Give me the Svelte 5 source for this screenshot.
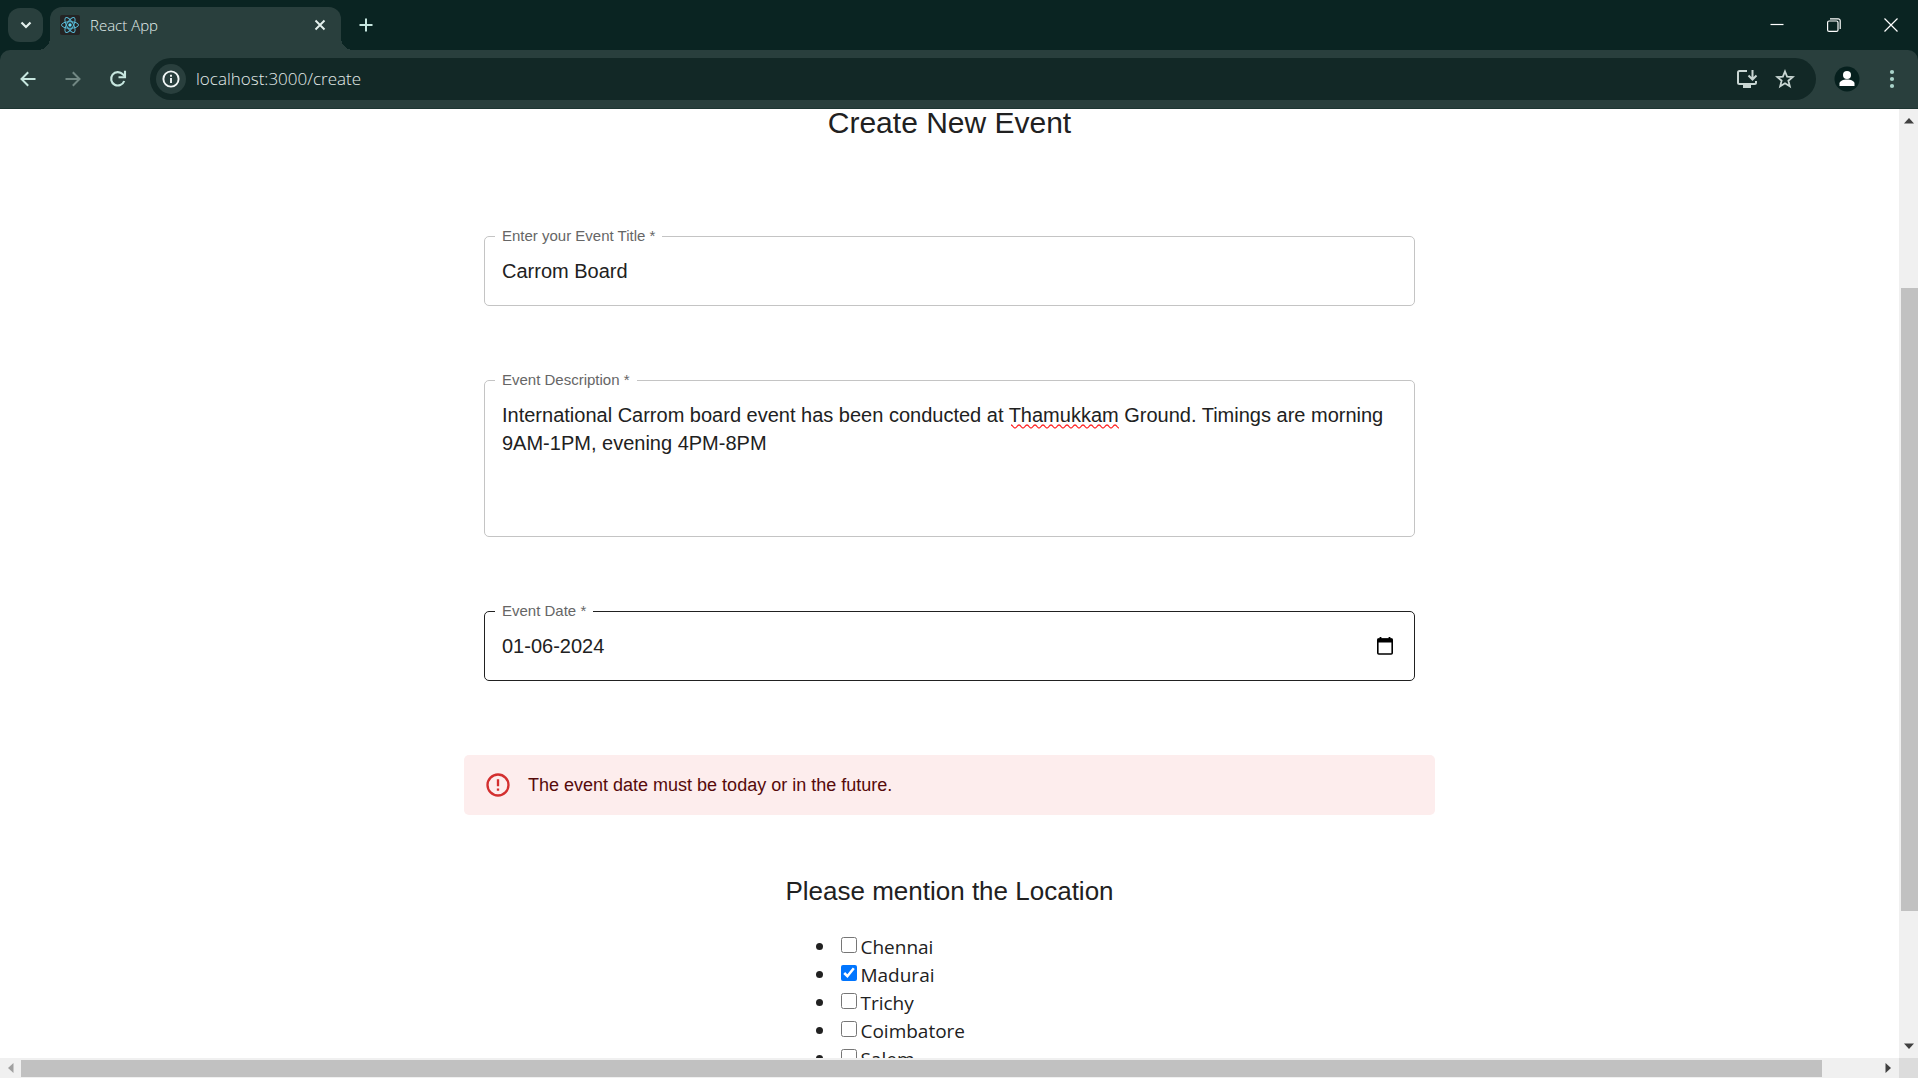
<script>
  let title = $state('Carrom Board');
  let description = $state(
    'International Carrom board event has been conducted at Thamukkam Ground. Timings are morning 9AM-1PM, evening 4PM-8PM'
  );
  let date = $state('01-06-2024');
  let url = $state('localhost:3000/create');
  let locations = $state([
    { name: 'Chennai', checked: false },
    { name: 'Madurai', checked: true },
    { name: 'Trichy', checked: false },
    { name: 'Coimbatore', checked: false },
    { name: 'Salem', checked: false }
  ]);
</script>

<div class="browser">
  <header class="tabstrip">
    <button class="tab-search" aria-label="Search tabs">
      <svg width="12" height="8" viewBox="0 0 12 8"><path d="M1.5 1.5 6 6l4.500-4.500" fill="none" stroke="#e4f1ee" stroke-width="2.200" /></svg>
    </button>
    <div class="tab">
      <svg class="favicon" width="20" height="20" viewBox="0 0 20 20">
        <rect width="20" height="20" rx="2" fill="#242424" />
        <g fill="none" stroke="#58b9d6" stroke-width="1">
          <ellipse cx="10" cy="10" rx="8.500" ry="3.300" />
          <ellipse cx="10" cy="10" rx="8.500" ry="3.300" transform="rotate(60 10 10)" />
          <ellipse cx="10" cy="10" rx="8.500" ry="3.300" transform="rotate(120 10 10)" />
        </g>
        <circle cx="10" cy="10" r="1.700" fill="#61dafb" />
      </svg>
      <span class="tab-title">React App</span>
      <button class="icon small" aria-label="Close tab">
        <svg width="12" height="12" viewBox="0 0 12 12"><path d="M1.500 1.500l9 9M10.500 1.500l-9 9" stroke="#e4f1ee" stroke-width="1.900" /></svg>
      </button>
    </div>
    <button class="icon new-tab" aria-label="New tab">
      <svg width="14" height="14" viewBox="0 0 14 14"><path d="M7 0.500v13M0.500 7h13" stroke="#c6e6df" stroke-width="2" /></svg>
    </button>
    <div class="window-controls">
      <button class="icon" aria-label="Minimize">
        <svg width="14" height="14" viewBox="0 0 14 14"><path d="M0.500 6.500h13" stroke="#fff" stroke-width="1.200" /></svg>
      </button>
      <button class="icon" aria-label="Restore">
        <svg width="14" height="14" viewBox="0 0 14 14" fill="none" stroke="#fff" stroke-width="1.200"><rect x="0.600" y="3" width="10.400" height="10.400" rx="1.500" /><path d="M3 0.800h8.200a2 2 0 0 1 2 2V11" /></svg>
      </button>
      <button class="icon" aria-label="Close window">
        <svg width="14" height="14" viewBox="0 0 14 14"><path d="M0.500 0.500l13 13M13.500 0.500l-13 13" stroke="#fff" stroke-width="1.200" /></svg>
      </button>
    </div>
  </header>

  <nav class="toolbar">
    <button class="icon" aria-label="Back">
      <svg width="16" height="16" viewBox="0 0 16 16"><path d="M15.500 8H1.800M8.200 1.200 1.500 8l6.700 6.800" fill="none" stroke="#c6e6df" stroke-width="2" /></svg>
    </button>
    <button class="icon" aria-label="Forward">
      <svg width="16" height="16" viewBox="0 0 16 16"><path d="M0.500 8h13.700M7.800 1.200 14.500 8l-6.700 6.800" fill="none" stroke="#718783" stroke-width="2" /></svg>
    </button>
    <button class="icon" aria-label="Reload">
      <svg width="18" height="18" viewBox="0 0 18 18"><path d="M15.200 11A6.700 6.700 0 1 1 13.800 4.300L15.800 6.300" fill="none" stroke="#c6e6df" stroke-width="2.100" /><path d="M16 0.800V7.300H9.500" fill="none" stroke="#c6e6df" stroke-width="2.100" /></svg>
    </button>
    <div class="omnibox">
      <button class="site-info" aria-label="View site information">
        <svg width="18" height="18" viewBox="0 0 18 18"><circle cx="9" cy="9" r="7.600" fill="none" stroke="#f2f7f6" stroke-width="1.900" /><path d="M9 8v5M9 4.800v2" stroke="#f2f7f6" stroke-width="1.900" /></svg>
      </button>
      <input class="url" type="text" aria-label="Address" spellcheck="false" bind:value={url} />
      <button class="icon" aria-label="Install app">
        <svg width="22" height="20" viewBox="0 0 22 20" fill="none" stroke="#c9d6d3" stroke-width="2"><path d="M11 2H3.500A1.500 1.500 0 0 0 2 3.500v10A1.500 1.500 0 0 0 3.500 15h15a1.500 1.500 0 0 0 1.500-1.500V12" /><path d="M16.500 1v9M12.500 6.500l4 4 4-4" /><path d="M7 17.500h8" stroke-width="3" /></svg>
      </button>
      <button class="icon" aria-label="Bookmark this tab">
        <svg width="20" height="20" viewBox="0 0 20 20"><path d="M10 2.500l2.100 5.200 5.600.4-4.300 3.600 1.400 5.500L10 14.200l-4.800 3 1.400-5.500-4.300-3.600 5.600-.4z" fill="none" stroke="#c9d6d3" stroke-width="1.800" /></svg>
      </button>
    </div>
    <button class="icon" aria-label="Profile">
      <svg width="26" height="26" viewBox="0 0 26 26"><circle cx="13" cy="13" r="12.500" fill="#06201e" /><circle cx="13" cy="9" r="4" fill="#fff" /><path d="M5.500 20v-2.500c0-2.500 4-4 7.500-4s7.500 1.500 7.500 4V20z" fill="#fff" /></svg>
    </button>
    <button class="icon" aria-label="Menu">
      <svg width="6" height="20" viewBox="0 0 6 20" fill="#a9d3ca"><circle cx="3" cy="3" r="2.100" /><circle cx="3" cy="10" r="2.100" /><circle cx="3" cy="17" r="2.100" /></svg>
    </button>
  </nav>

  <div class="viewport">
    <main class="page">
      <h1>Create New Event</h1>
      <form>
        <fieldset>
          <legend><label for="title">Enter your Event Title *</label></legend>
          <input id="title" type="text" bind:value={title} />
        </fieldset>
        <fieldset class="area">
          <legend><label for="description">Event Description *</label></legend>
          <textarea id="description" spellcheck="false" bind:value={description}></textarea>
          <svg class="squiggle" width="108" height="5" viewBox="0 0 108 5">
            <defs>
              <pattern id="wave" width="8" height="5" patternUnits="userSpaceOnUse"><path d="M-2 2.500Q0 -0.500 2 2.500T6 2.500T10 2.500" fill="none" stroke="#f22" stroke-width="1.300" /></pattern>
            </defs>
            <rect width="108" height="5" fill="url(#wave)" />
          </svg>
        </fieldset>
        <fieldset class="active">
          <legend><label for="date">Event Date *</label></legend>
          <div class="date-row">
            <input id="date" type="text" bind:value={date} />
            <button type="button" class="icon calendar" aria-label="Open calendar">
              <svg width="16" height="18" viewBox="0 0 16 18"><path d="M3.500 0v3M12.500 0v3" stroke="#000" stroke-width="1.800" /><rect x="0.800" y="2" width="14.400" height="15" rx="1" fill="none" stroke="#000" stroke-width="1.600" /><path d="M0.500 1.500h15v4h-15z" /></svg>
            </button>
          </div>
        </fieldset>
      </form>
      <div class="alert" role="alert">
        <svg width="28" height="28" viewBox="0 0 24 24" fill="#d32f2f"><path d="M11 15h2v2h-2zm0-8h2v6h-2zm1-5C6.470 2 2 6.500 2 12a10 10 0 1 0 10-10zm0 18a8 8 0 1 1 0-16 8 8 0 0 1 0 16z" /></svg>
        <span>The event date must be today or in the future.</span>
      </div>
      <section class="locations">
        <h2>Please mention the Location</h2>
        <ul>
          {#each locations as place}
            <li><label><input type="checkbox" bind:checked={place.checked} />{place.name}</label></li>
          {/each}
        </ul>
      </section>
    </main>
    <div class="scroll vertical">
      <svg width="10" height="6" viewBox="0 0 10 6"><path d="M0 5.500 5 0l5 5.500z" fill="#404040" /></svg>
      <div class="track"><div class="thumb"></div></div>
      <svg width="10" height="6" viewBox="0 0 10 6"><path d="M0 .5 5 6 10 .5z" fill="#404040" /></svg>
    </div>
    <div class="scroll horizontal">
      <svg width="6" height="10" viewBox="0 0 6 10"><path d="M5.500 0 0 5l5.500 5z" fill="#a0a0a0" /></svg>
      <div class="track"><div class="thumb"></div></div>
      <svg width="6" height="10" viewBox="0 0 6 10"><path d="M.5 0 6 5l-5.500 5z" fill="#404040" /></svg>
    </div>
    <div class="corner"></div>
  </div>
</div>

<style>
  :global(body) {
    margin: 0;
    overflow: hidden;
    background: #0a2422;
  }
  .browser {
    display: flex;
    flex-direction: column;
    height: 100vh;
    color: #212121;
    font-family: 'Liberation Sans', Arial, sans-serif;
  }
  .browser * {
    box-sizing: border-box;
  }
  button {
    display: flex;
    align-items: center;
    justify-content: center;
    flex: none;
    padding: 0;
    border: 0;
    background: none;
  }
  input,
  textarea {
    border: 0;
    outline: 0;
    background: none;
    color: inherit;
    font: inherit;
  }
  svg {
    display: block;
    flex: none;
  }
  .icon {
    width: 28px;
    height: 28px;
  }

  .tabstrip {
    display: flex;
    align-items: center;
    flex: none;
    height: 50px;
    padding-left: 8px;
    background: #0a2422;
  }
  .tab-search {
    width: 35px;
    height: 34px;
    border-radius: 12px;
    background: #293f3d;
  }
  .tab {
    position: relative;
    display: flex;
    align-items: center;
    align-self: flex-end;
    gap: 10px;
    width: 291px;
    height: 43px;
    margin-left: 7px;
    padding: 0 7px 7px 10px;
    border-radius: 12px 12px 0 0;
    background: #293f3d;
  }
  .tab::before,
  .tab::after {
    content: '';
    position: absolute;
    bottom: 0;
    width: 12px;
    height: 12px;
  }
  .tab::before {
    right: 100%;
    background: radial-gradient(circle at 0 0, transparent 12px, #293f3d 12px);
  }
  .tab::after {
    left: 100%;
    background: radial-gradient(circle at 100% 0, transparent 12px, #293f3d 12px);
  }
  .tab-title {
    flex: 1;
    color: #e4f1ee;
    font: 15px/20px 'Open Sans', 'Noto Sans', sans-serif;
    font-weight: 300;
  }
  .new-tab {
    margin-left: 11px;
  }
  .window-controls {
    display: flex;
    gap: 29px;
    margin-left: auto;
    padding-right: 13px;
  }

  .toolbar {
    display: flex;
    align-items: center;
    flex: none;
    gap: 17px;
    height: 59px;
    padding: 0 12px 0 14px;
    border-bottom: 1px solid #1d3532;
    border-radius: 10px 10px 0 0;
    background: #293f3d;
  }
  .omnibox {
    display: flex;
    align-items: center;
    flex: 1;
    gap: 10px;
    height: 42px;
    margin-left: 1px;
    padding: 0 17px 0 6px;
    border-radius: 21px;
    background: #122826;
  }
  .site-info {
    width: 30px;
    height: 30px;
    border-radius: 50%;
    background: #293f3d;
  }
  .url {
    flex: 1;
    min-width: 0;
    padding: 0;
    color: #e4ecea;
    font: 17px/24px 'Open Sans', 'Noto Sans', sans-serif;
    font-weight: 300;
  }

  .viewport {
    display: grid;
    grid-template: minmax(0, 1fr) 20px / minmax(0, 1fr) 19px;
    flex: 1;
    min-height: 0;
    background: #fff;
  }
  .page {
    overflow: hidden;
  }
  h1,
  h2 {
    margin: 0;
    font-weight: 400;
  }
  h1 {
    font-size: 30px;
    line-height: 28px;
    text-align: center;
  }
  form {
    display: flex;
    flex-direction: column;
    gap: 64px;
    max-width: 931px;
    margin: 89px auto 0;
  }
  fieldset {
    position: relative;
    min-width: 0;
    margin: 0;
    padding: 0 0 9px;
    border: 1px solid #c4c4c4;
    border-radius: 5px;
    font-size: 20px;
  }
  fieldset.area {
    padding-bottom: 0;
  }
  fieldset.active {
    border-color: #212121;
  }
  legend {
    margin-left: 10px;
    padding: 0 7px;
    color: #666;
    font-size: 15px;
    line-height: 20px;
  }
  fieldset input {
    display: block;
    width: 100%;
    height: 50px;
    padding: 0 17px;
  }
  textarea {
    display: block;
    width: 100%;
    height: 146px;
    padding: 11px 17px;
    line-height: 28px;
    resize: none;
  }
  .squiggle {
    position: absolute;
    top: 34px;
    left: 526px;
  }
  .date-row {
    display: flex;
    align-items: center;
  }
  .calendar {
    margin-right: 15px;
  }

  .alert {
    display: flex;
    align-items: center;
    gap: 16px;
    max-width: 971px;
    height: 60px;
    margin: 74px auto 0;
    padding: 0 20px;
    border-radius: 5px;
    background: #fdeded;
    color: #560a0a;
    font-size: 18px;
  }
  .locations {
    width: fit-content;
    margin: 56px auto 0;
  }
  h2 {
    font-size: 26px;
    line-height: 40px;
  }
  ul {
    margin: 21px 0 0;
    padding-left: 51px;
    font: 19px/28px 'Open Sans', 'Noto Sans', sans-serif;
  }
  li {
    height: 28px;
  }
  li label {
    display: flex;
    align-items: center;
  }
  li input {
    width: 16px;
    height: 16px;
    margin: 0 3px 3px 5px;
  }

  .scroll {
    display: flex;
    align-items: center;
    background: #f0f0f0;
  }
  .vertical {
    flex-direction: column;
    padding: 9px 0;
  }
  .horizontal {
    padding: 0 8px;
  }
  .track {
    display: flex;
    flex: 1;
  }
  .vertical .track {
    flex-direction: column;
    align-self: stretch;
    margin: 5px 0 5px 2px;
  }
  .vertical .track::before {
    content: '';
    flex: 159;
  }
  .vertical .thumb {
    flex: 623;
  }
  .vertical .track::after {
    content: '';
    flex: 127;
  }
  .horizontal .track {
    align-self: stretch;
    margin: 2px 7px 1px;
  }
  .horizontal .thumb {
    width: 97%;
  }
  .thumb {
    background: #c1c1c1;
  }
  .corner {
    background: #dcdcdc;
  }
</style>
